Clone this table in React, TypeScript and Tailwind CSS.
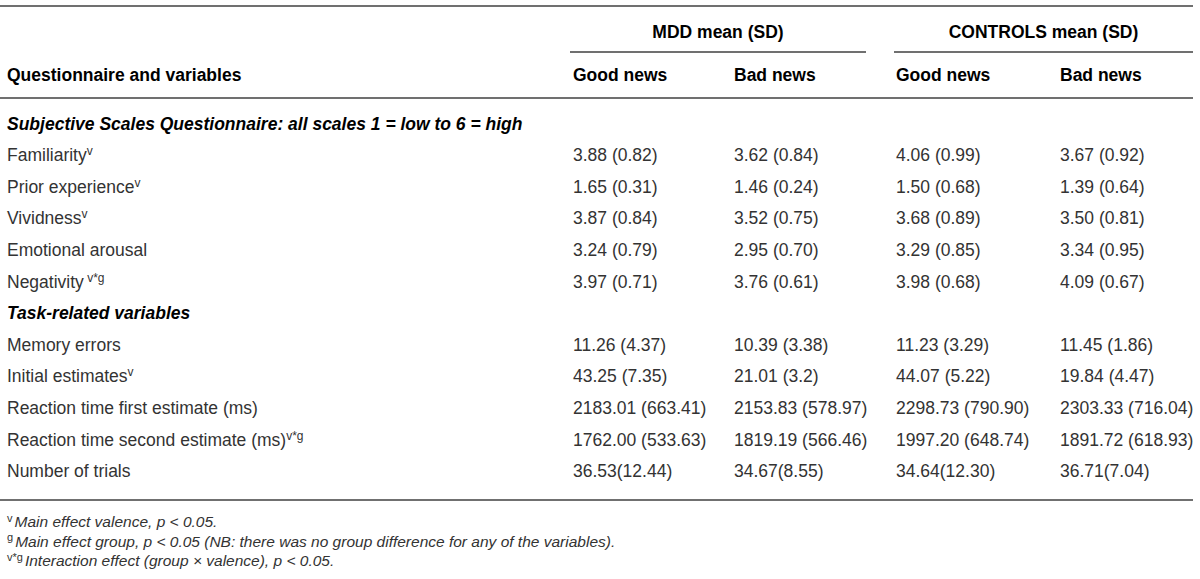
const GROUPS = ["MDD mean (SD)", "CONTROLS mean (SD)"];

type Row = { label: string; sup?: string; supGap?: boolean; values: string[] };

const SECTIONS: { title: string; rows: Row[] }[] = [
  {
    title: "Subjective Scales Questionnaire: all scales 1 = low to 6 = high",
    rows: [
      { label: "Familiarity", sup: "v", values: ["3.88 (0.82)", "3.62 (0.84)", "4.06 (0.99)", "3.67 (0.92)"] },
      { label: "Prior experience", sup: "v", values: ["1.65 (0.31)", "1.46 (0.24)", "1.50 (0.68)", "1.39 (0.64)"] },
      { label: "Vividness", sup: "v", values: ["3.87 (0.84)", "3.52 (0.75)", "3.68 (0.89)", "3.50 (0.81)"] },
      { label: "Emotional arousal", values: ["3.24 (0.79)", "2.95 (0.70)", "3.29 (0.85)", "3.34 (0.95)"] },
      { label: "Negativity", sup: "v*g", supGap: true, values: ["3.97 (0.71)", "3.76 (0.61)", "3.98 (0.68)", "4.09 (0.67)"] },
    ],
  },
  {
    title: "Task-related variables",
    rows: [
      { label: "Memory errors", values: ["11.26 (4.37)", "10.39 (3.38)", "11.23 (3.29)", "11.45 (1.86)"] },
      { label: "Initial estimates", sup: "v", values: ["43.25 (7.35)", "21.01 (3.2)", "44.07 (5.22)", "19.84 (4.47)"] },
      { label: "Reaction time first estimate (ms)", values: ["2183.01 (663.41)", "2153.83 (578.97)", "2298.73 (790.90)", "2303.33 (716.04)"] },
      { label: "Reaction time second estimate (ms)", sup: "v*g", values: ["1762.00 (533.63)", "1819.19 (566.46)", "1997.20 (648.74)", "1891.72 (618.93)"] },
      { label: "Number of trials", values: ["36.53(12.44)", "34.67(8.55)", "34.64(12.30)", "36.71(7.04)"] },
    ],
  },
];

const FOOTNOTES = [
  { mark: "v", text: "Main effect valence, p < 0.05." },
  { mark: "g", text: "Main effect group, p < 0.05 (NB: there was no group difference for any of the variables)." },
  { mark: "v*g", text: "Interaction effect (group × valence), p < 0.05." },
];

const COLS = "grid grid-cols-[570px_161px_162px_164px_1fr]";

function Rule() {
  return <div className="h-[2px] bg-[#707070]" />;
}

export default function App() {
  return (
    <div
      className="w-[1200px] h-[579px] bg-white text-[#333] overflow-hidden"
      style={{ fontFamily: '"Liberation Sans", Arial, sans-serif' }}
    >
      <div className="w-[1193px] pt-[5px]">
        <Rule />

        {/* group headings */}
        <div className={`${COLS} h-[46px]`}>
          <div />
          <div className="col-span-2 flex flex-col h-full">
            <div className="flex-1 flex items-center justify-center pr-[27px] pt-[6px] text-[17.5px] font-bold text-black">
              {GROUPS[0]}
            </div>
            <div className="h-[2px] bg-[#707070] mr-[27px]" />
          </div>
          <div className="col-span-2 flex flex-col h-full">
            <div className="flex-1 flex items-center justify-center pl-[1px] pt-[6px] text-[17.5px] font-bold text-black">
              {GROUPS[1]}
            </div>
            <div className="h-[2px] bg-[#707070] ml-[1px]" />
          </div>
        </div>

        <div className={`${COLS} h-[44px] items-center text-[17.5px] font-bold text-black`}>
          <div className="pl-[7px]">Questionnaire and variables</div>
          <div className="pl-[3px]">Good news</div>
          <div className="pl-[3px]">Bad news</div>
          <div className="pl-[3px]">Good news</div>
          <div className="pl-[3px]">Bad news</div>
        </div>
        <Rule />

        <div className="pt-[9px] pb-[12px]">
          {SECTIONS.map((section) => (
            <div key={section.title}>
              <div className="h-[31.6px] flex items-center pl-[7px] text-[17.5px] font-bold italic text-black">
                {section.title}
              </div>
              {section.rows.map((row) => (
                <div key={row.label} className={`${COLS} h-[31.6px] items-center text-[17.5px]`}>
                  <div className="pl-[7px]">
                    {row.label}
                    {row.sup && (
                      <sup className="text-[12px]">
                        {row.supGap ? " " : ""}
                        {row.sup}
                      </sup>
                    )}
                  </div>
                  {row.values.map((v, i) => (
                    <div key={i} className="pl-[3px] whitespace-nowrap">
                      {v}
                    </div>
                  ))}
                </div>
              ))}
            </div>
          ))}
        </div>
        <Rule />

        <div className="pt-[11px] pl-[7px] text-[15.5px] leading-[19.5px]">
          {FOOTNOTES.map((f) => (
            <div key={f.mark}>
              <sup className="text-[11px] not-italic">{f.mark}</sup>
              <span className="italic ml-[2px]">{f.text}</span>
            </div>
          ))}
        </div>
      </div>
    </div>
  );
}
